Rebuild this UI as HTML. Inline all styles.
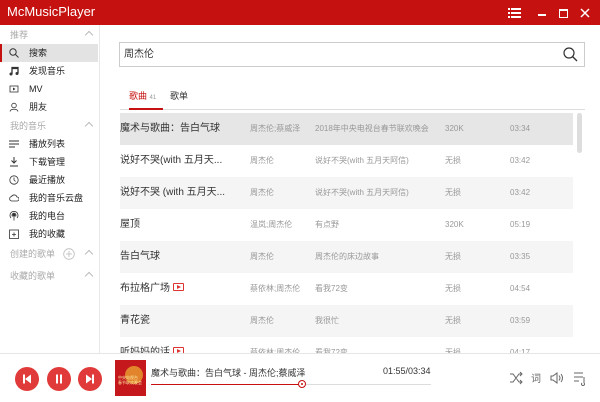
<!DOCTYPE html>
<html><head><meta charset="utf-8"><style>
*{margin:0;padding:0;box-sizing:border-box}
body{width:600px;height:402px;overflow:hidden;background:#fff;font-family:"Liberation Sans","Noto Sans CJK SC",sans-serif;position:relative;color:#333}
.hdr{position:absolute;left:0;top:0;width:600px;height:25px;background:#c5110f;color:#fff}
.hdr .t{position:absolute;left:7px;top:4px;font-size:13px}
.side{position:absolute;left:0;top:25px;width:100px;height:328px;border-right:1px solid #e8e8e8}
.si{position:absolute;left:0;width:98px;height:18px;font-size:9px;line-height:18px;padding-left:29px;color:#222}
.sh{color:#aaa;padding-left:10px}
.ic{position:absolute;left:9px;top:4px;width:10px;height:10px}
.car{position:absolute;left:86px;top:6px;width:6px;height:6px;border-left:1px solid #bbb;border-top:1px solid #bbb;transform:rotate(45deg)}
.row{position:absolute;left:120px;width:453px;height:32px;font-size:8px;color:#999;line-height:32px}
.row span{position:absolute;top:0}
.row .a{left:0;font-size:10px;color:#333}
.row .b{left:130px}.row .c{left:195px}.row .d{left:325px}.row .e{left:390px}
.btn{position:absolute;top:367px;width:24px;height:24px;border-radius:50%;background:#e03a3a}
.mv{display:inline-block;width:11px;height:8px;border:1px solid #d33;border-radius:1px;vertical-align:middle;margin-left:3px;position:relative;top:-1px}
.mv:after{content:"";position:absolute;left:3px;top:1px;border-left:4px solid #d33;border-top:2px solid transparent;border-bottom:2px solid transparent}
</style></head><body>
<div class="hdr"><div class="t">McMusicPlayer</div>
<svg style="position:absolute;left:505px;top:7px" width="90" height="12">
<g fill="#fff"><rect x="3" y="1" width="2" height="2"/><rect x="6" y="1" width="10" height="2"/><rect x="3" y="5" width="2" height="2"/><rect x="6" y="5" width="10" height="2"/><rect x="3" y="9" width="2" height="2"/><rect x="6" y="9" width="10" height="2"/>
<rect x="33" y="7" width="8" height="2"/></g>
<rect x="54.5" y="2.5" width="8" height="8" fill="none" stroke="#fff"/><rect x="54" y="2" width="9" height="2" fill="#fff"/>
<path d="M76 2l8 8M84 2l-8 8" stroke="#fff" stroke-width="1.5"/></svg>
</div>
<div class="side">
<div class="si sh" style="top:1px">推荐<i class="car"></i></div>
<div class="si" style="top:19px;background:#e3e3e3"><i style="position:absolute;left:0;top:0;width:2px;height:18px;background:#c5110f"></i><svg class="ic" viewBox="0 0 10 10"><circle cx="4" cy="4" r="3.2" fill="none" stroke="#333"/><path d="M6.5 6.5L9.5 9.5" stroke="#333"/></svg>搜索</div>
<div class="si" style="top:37px"><svg class="ic" viewBox="0 0 10 10"><path d="M3 8V1.5h6V7.5M3 2.5h6" stroke="#333" fill="none" stroke-width="1.3"/><circle cx="2" cy="8" r="1.5" fill="#333"/><circle cx="8" cy="7.5" r="1.5" fill="#333"/></svg>发现音乐</div>
<div class="si" style="top:55px"><svg class="ic" viewBox="0 0 10 10"><rect x="1" y="2" width="8" height="6" fill="none" stroke="#333" stroke-width=".8"/><path d="M4 3.5v3l2.5-1.5z" fill="#333"/></svg>MV</div>
<div class="si" style="top:73px"><svg class="ic" viewBox="0 0 10 10"><circle cx="5" cy="3.5" r="2.3" fill="none" stroke="#333" stroke-width=".8"/><path d="M1 9.5c.5-3 7.5-3 8 0" fill="none" stroke="#333" stroke-width=".8"/></svg>朋友</div>
<div class="si sh" style="top:92px">我的音乐<i class="car"></i></div>
<div class="si" style="top:110px"><svg class="ic" viewBox="0 0 10 10"><path d="M0 2h10M0 5h10M0 8h6" stroke="#333"/></svg>播放列表</div>
<div class="si" style="top:128px"><svg class="ic" viewBox="0 0 10 10"><path d="M5 0v6M2.5 3.5L5 6l2.5-2.5M1 9h8" stroke="#333" fill="none"/></svg>下载管理</div>
<div class="si" style="top:146px"><svg class="ic" viewBox="0 0 10 10"><circle cx="5" cy="5" r="4.2" fill="none" stroke="#333" stroke-width=".8"/><path d="M5 2.5V5l1.5 1.5" stroke="#333" fill="none" stroke-width=".8"/></svg>最近播放</div>
<div class="si" style="top:164px"><svg class="ic" viewBox="0 0 10 10"><path d="M2.5 8h5.5a2 2 0 0 0 0-4a3 3 0 0 0-5.5-.5a2.3 2.3 0 0 0 0 4.5z" fill="none" stroke="#333" stroke-width=".8"/></svg>我的音乐云盘</div>
<div class="si" style="top:182px"><svg class="ic" viewBox="0 0 10 10"><circle cx="5" cy="4" r="1.5" fill="#333"/><path d="M2 7a4 4 0 1 1 6 0M3.5 5.5a2 2 0 1 1 3 0M5 5.5v4" fill="none" stroke="#333" stroke-width=".8"/></svg>我的电台</div>
<div class="si" style="top:200px"><svg class="ic" viewBox="0 0 10 10"><rect x=".5" y="1" width="9" height="8.5" fill="none" stroke="#333" stroke-width=".8"/><path d="M5 3.5v4M3 5.5h4" stroke="#333" stroke-width=".8"/></svg>我的收藏</div>
<div class="si sh" style="top:220px">创建的歌单<svg style="position:absolute;left:63px;top:3px" width="12" height="12"><circle cx="6" cy="6" r="5.3" fill="none" stroke="#bbb" stroke-width=".8"/><path d="M6 3v6M3 6h6" stroke="#bbb" stroke-width=".8"/></svg><i class="car"></i></div>
<div class="si sh" style="top:242px">收藏的歌单<i class="car"></i></div>
</div>
<div style="position:absolute;left:119px;top:42px;width:466px;height:25px;border:1px solid #ccc;font-size:10px;line-height:23px;padding-left:4px">周杰伦
<svg style="position:absolute;right:6px;top:4px" width="15" height="15"><circle cx="6" cy="6" r="5" fill="none" stroke="#333" stroke-width="1.2"/><path d="M9.5 9.5L14 14" stroke="#333" stroke-width="1.3"/></svg></div>
<div style="position:absolute;left:129px;top:89px;font-size:9px;color:#c5110f">歌曲 <span style="font-size:6px;color:#999">41</span></div>
<div style="position:absolute;left:170px;top:89px;font-size:9px;color:#333">歌单</div>
<div style="position:absolute;left:120px;top:109px;width:465px;height:1px;background:#ddd"></div>
<div style="position:absolute;left:129px;top:108px;width:34px;height:2px;background:#c5110f"></div>
<div style="position:absolute;left:577px;top:113px;width:5px;height:40px;background:#ddd;border-radius:3px"></div>
<div class="row" style="top:113px;background:#e6e6e6"><span class="a">魔术与歌曲：告白气球</span><span class="b">周杰伦;蔡威泽</span><span class="c">2018年中央电视台春节联欢晚会</span><span class="d">320K</span><span class="e">03:34</span></div>
<div class="row" style="top:145px"><span class="a">说好不哭(with 五月天...</span><span class="b">周杰伦</span><span class="c">说好不哭(with 五月天阿信)</span><span class="d">无损</span><span class="e">03:42</span></div>
<div class="row" style="top:177px;background:#f5f5f5"><span class="a">说好不哭 (with 五月天...</span><span class="b">周杰伦</span><span class="c">说好不哭(with 五月天阿信)</span><span class="d">无损</span><span class="e">03:42</span></div>
<div class="row" style="top:209px"><span class="a">屋顶</span><span class="b">温岚;周杰伦</span><span class="c">有点野</span><span class="d">320K</span><span class="e">05:19</span></div>
<div class="row" style="top:241px;background:#f5f5f5"><span class="a">告白气球</span><span class="b">周杰伦</span><span class="c">周杰伦的床边故事</span><span class="d">无损</span><span class="e">03:35</span></div>
<div class="row" style="top:273px"><span class="a">布拉格广场<i class="mv"></i></span><span class="b">蔡依林;周杰伦</span><span class="c">看我72变</span><span class="d">无损</span><span class="e">04:54</span></div>
<div class="row" style="top:305px;background:#f5f5f5"><span class="a">青花瓷</span><span class="b">周杰伦</span><span class="c">我很忙</span><span class="d">无损</span><span class="e">03:59</span></div>
<div class="row" style="top:337px"><span class="a">听妈妈的话<i class="mv"></i></span><span class="b">蔡依林;周杰伦</span><span class="c">看我72变</span><span class="d">无损</span><span class="e">04:17</span></div>
<div style="position:absolute;left:0;top:353px;width:600px;height:49px;background:#fff;border-top:1px solid #e6e6e6"></div>
<div class="btn" style="left:15px"><svg width="24" height="24"><rect x="8" y="7.5" width="2" height="9" fill="#fff"/><path d="M16 7.5v9l-6-4.5z" fill="#fff"/></svg></div>
<div class="btn" style="left:47px"><svg width="24" height="24"><rect x="9" y="7.5" width="2" height="9" fill="#fff"/><rect x="13" y="7.5" width="2" height="9" fill="#fff"/></svg></div>
<div class="btn" style="left:78px"><svg width="24" height="24"><path d="M8 7.5v9l6-4.5z" fill="#fff"/><rect x="14" y="7.5" width="2" height="9" fill="#fff"/></svg></div>
<div style="position:absolute;left:115px;top:360px;width:31px;height:36px;background:#c4181c"><div style="position:absolute;left:10px;top:6px;width:18px;height:18px;border-radius:50%;background:#e8a030;opacity:.8"></div><div style="position:absolute;left:3px;top:15px;font-size:4px;color:#fde7a0;line-height:5px">中央电视台<br>春节联欢晚会</div></div>
<div style="position:absolute;left:151px;top:366px;font-size:9px;color:#333">魔术与歌曲：告白气球 - 周杰伦;蔡威泽</div>
<div style="position:absolute;left:383px;top:366px;font-size:9px;color:#333">01:55/03:34</div>
<div style="position:absolute;left:151px;top:384px;width:280px;height:1px;background:#ddd"></div>
<div style="position:absolute;left:151px;top:383.5px;width:150px;height:1.5px;background:#c5110f"></div>
<div style="position:absolute;left:298px;top:380px;width:8px;height:8px;border-radius:50%;border:1px solid #c5110f;background:#fff"><i style="position:absolute;left:2px;top:2px;width:2px;height:2px;background:#c5110f;border-radius:50%"></i></div>
<svg style="position:absolute;left:508px;top:370px" width="90" height="16" fill="none" stroke="#666" stroke-width="1">
<path d="M2 4h3l6 8h3M2 12h3l6-8h3M12 2l2 2-2 2M12 10l2 2-2 2"/>
<text x="23" y="12" font-size="10" fill="#666" stroke="none" font-family="Noto Sans CJK SC">词</text>
<path d="M43 6h2l4-3v10l-4-3h-2zM51 5.5q2 2.5 0 5M53 4q3 4 0 8"/>
<path d="M66 3h9M66 7h9M66 11h5M76 7v6M74 13a1.5 1.5 0 1 0 2 0"/></svg>
</body></html>
